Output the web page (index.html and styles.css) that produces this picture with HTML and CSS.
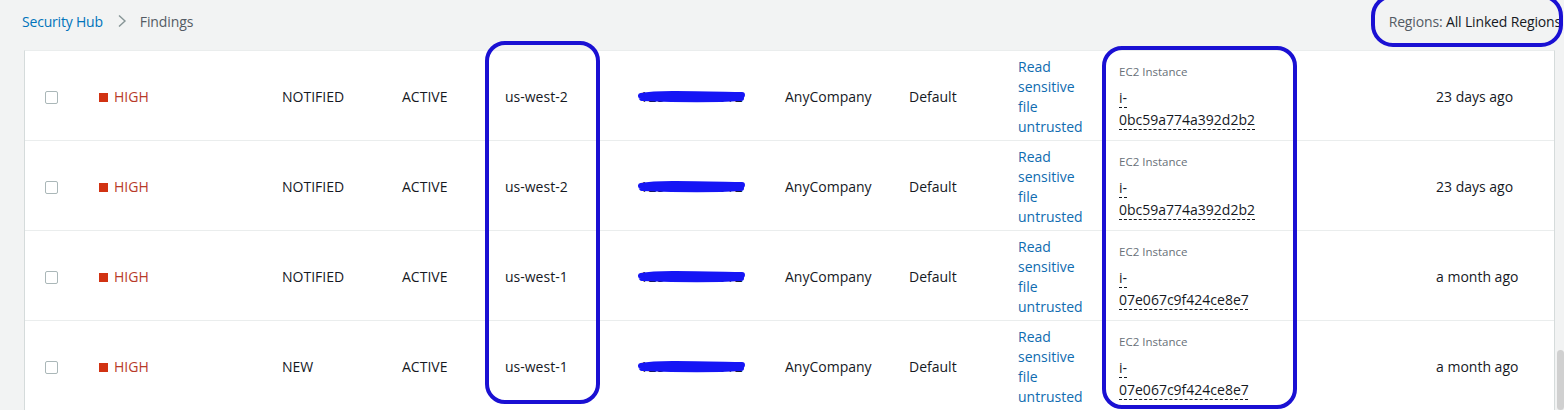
FILE: index.html
```html
<!DOCTYPE html>
<html>
<head>
<meta charset="utf-8">
<link rel="stylesheet" href="styles.css">
</head>
<body>
<div class="page">
  <header class="topbar">
    <nav class="crumbs">
      <a class="crumb-link">Security Hub</a>
      <svg class="chev" width="10" height="14" viewBox="0 0 10 14"><path d="M2 1.5 L8 7 L2 12.5" fill="none" stroke="#879596" stroke-width="1.4"/></svg>
      <span class="crumb-current">Findings</span>
    </nav>
    <div class="regions"><span class="reg-label">Regions:</span> <span class="reg-value">All Linked Regions</span></div>
  </header>

  <div class="table-wrap">
    <div class="table">
      <div class="row">
        <div class="cell chk"><span class="box"></span></div>
        <div class="cell sev"><span class="sq"></span>HIGH</div>
        <div class="cell">NOTIFIED</div>
        <div class="cell">ACTIVE</div>
        <div class="cell">us-west-2</div>
        <div class="cell acct"><span class="acct-text">123456789012</span><svg class="redact" width="108" height="14" viewBox="0 0 108 14"><path d="M3 6 C20 3 50 4 104 5 M4 8 C30 9 70 10 103 8" fill="none" stroke="#1515f5" stroke-width="6" stroke-linecap="round"/></svg></div>
        <div class="cell">AnyCompany</div>
        <div class="cell">Default</div>
        <div class="cell title"><a class="title-link">Read sensitive file untrusted</a></div>
        <div class="cell res"><div class="res-inner"><div class="res-type">EC2 Instance</div><div class="res-id">i-0bc59a774a392d2b2</div></div></div>
        <div class="cell">23 days ago</div>
      </div>
      <div class="row">
        <div class="cell chk"><span class="box"></span></div>
        <div class="cell sev"><span class="sq"></span>HIGH</div>
        <div class="cell">NOTIFIED</div>
        <div class="cell">ACTIVE</div>
        <div class="cell">us-west-2</div>
        <div class="cell acct"><span class="acct-text">123456789012</span><svg class="redact" width="108" height="14" viewBox="0 0 108 14"><path d="M3 6 C20 3 50 4 104 5 M4 8 C30 9 70 10 103 8" fill="none" stroke="#1515f5" stroke-width="6" stroke-linecap="round"/></svg></div>
        <div class="cell">AnyCompany</div>
        <div class="cell">Default</div>
        <div class="cell title"><a class="title-link">Read sensitive file untrusted</a></div>
        <div class="cell res"><div class="res-inner"><div class="res-type">EC2 Instance</div><div class="res-id">i-0bc59a774a392d2b2</div></div></div>
        <div class="cell">23 days ago</div>
      </div>
      <div class="row">
        <div class="cell chk"><span class="box"></span></div>
        <div class="cell sev"><span class="sq"></span>HIGH</div>
        <div class="cell">NOTIFIED</div>
        <div class="cell">ACTIVE</div>
        <div class="cell">us-west-1</div>
        <div class="cell acct"><span class="acct-text">123456789012</span><svg class="redact" width="108" height="14" viewBox="0 0 108 14"><path d="M3 6 C20 3 50 4 104 5 M4 8 C30 9 70 10 103 8" fill="none" stroke="#1515f5" stroke-width="6" stroke-linecap="round"/></svg></div>
        <div class="cell">AnyCompany</div>
        <div class="cell">Default</div>
        <div class="cell title"><a class="title-link">Read sensitive file untrusted</a></div>
        <div class="cell res"><div class="res-inner"><div class="res-type">EC2 Instance</div><div class="res-id">i-07e067c9f424ce8e7</div></div></div>
        <div class="cell">a month ago</div>
      </div>
      <div class="row">
        <div class="cell chk"><span class="box"></span></div>
        <div class="cell sev"><span class="sq"></span>HIGH</div>
        <div class="cell">NEW</div>
        <div class="cell">ACTIVE</div>
        <div class="cell">us-west-1</div>
        <div class="cell acct"><span class="acct-text">123456789012</span><svg class="redact" width="108" height="14" viewBox="0 0 108 14"><path d="M3 6 C20 3 50 4 104 5 M4 8 C30 9 70 10 103 8" fill="none" stroke="#1515f5" stroke-width="6" stroke-linecap="round"/></svg></div>
        <div class="cell">AnyCompany</div>
        <div class="cell">Default</div>
        <div class="cell title"><a class="title-link">Read sensitive file untrusted</a></div>
        <div class="cell res"><div class="res-inner"><div class="res-type">EC2 Instance</div><div class="res-id">i-07e067c9f424ce8e7</div></div></div>
        <div class="cell">a month ago</div>
      </div>
    </div>
  </div>

  <div class="scroll-thumb"></div>
  <div class="mark mark-region"></div>
  <div class="mark mark-resource"></div>
  <div class="mark mark-top"></div>
</div>
</body>
</html>
```

FILE: styles.css
```css
* { box-sizing: border-box; }
html, body { margin: 0; padding: 0; }
body {
  background: #f2f3f3;
  font-family: "Open Sans", "Noto Sans", sans-serif;
  font-size: 14px;
  color: #16191f;
  width: 1564px;
  height: 410px;
  overflow: hidden;
}
.page { position: relative; width: 1564px; height: 410px; overflow: hidden; }

.topbar {
  height: 50px;
  display: flex;
  align-items: center;
  padding: 0 3px 8px 22px;
}
.crumbs { display: flex; align-items: center; gap: 0; }
.crumb-link { color: #0073bb; letter-spacing: -0.2px; }
.chev { margin: 0 13px 0 14px; }
.crumb-current { color: #545b64; letter-spacing: -0.1px; }
.regions { margin-left: auto; white-space: nowrap; letter-spacing: -0.15px; }
.reg-label { color: #545b64; }
.reg-value { color: #16191f; }

.table-wrap {
  margin-left: 24px;
  width: 1531px;
  background: #fff;
  border-left: 1px solid #d5dbdb;
  border-right: 1px solid #d5dbdb;
  border-top: 1px solid #eaeded;
}
.row {
  display: grid;
  grid-template-columns: 74px 183px 120px 103px 135px 145px 124px 109px 101px 317px 1fr;
  height: 90px;
  border-bottom: 1px solid #eaeded;
  align-items: center;
}
.cell { white-space: nowrap; line-height: 20px; padding-top: 3px; }
.chk { padding-left: 20px; display: flex; align-items: center; }
.box {
  display: block;
  width: 13px; height: 13px;
  border: 1px solid #aab7b8;
  border-radius: 2px;
  background: #fff;
}
.sev { color: #b83a28; display: flex; align-items: center; }
.sq { width: 9px; height: 9px; background: #d13212; margin-right: 6px; display: inline-block; }

.acct { position: relative; }
.acct-text { color: #16191f; letter-spacing: 0.6px; }
.redact { position: absolute; left: -2px; top: 6px; }

.title { white-space: normal; }
.title-link { display: block; width: 70px; color: #0f6cb0; line-height: 20px; }

.res-inner { width: 130px; white-space: normal; }
.res-type { font-size: 11.5px; color: #687078; line-height: 16px; margin-bottom: 7px; }
.res-id {
  line-height: 22px;
  text-decoration: underline dashed #16191f;
  text-decoration-thickness: 1px;
  text-underline-offset: 4px;
}

.scroll-thumb {
  position: absolute;
  left: 1557px; top: 350px;
  width: 7px; height: 60px;
  background: #d0d0d0;
  border-radius: 4px;
}
.mark {
  position: absolute;
  border: 4px solid #1a10d3;
  border-radius: 20px;
  pointer-events: none;
}
.mark-region { left: 485px; top: 41px; width: 115px; height: 363px; }
.mark-resource { left: 1102px; top: 46px; width: 195px; height: 363px; }
.mark-top { left: 1371px; top: -6px; width: 192px; height: 53px; border-radius: 22px; }
```
